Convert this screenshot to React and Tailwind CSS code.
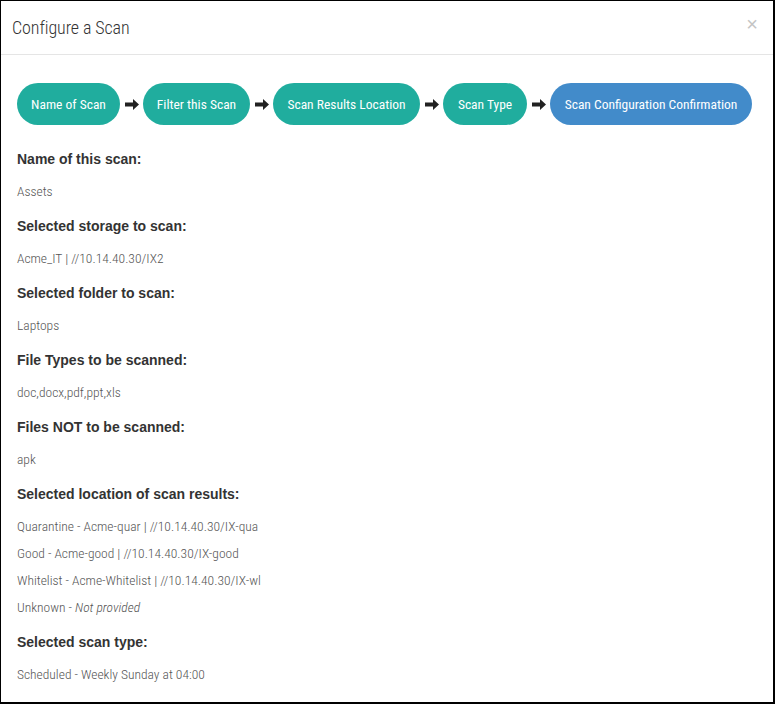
const STEPS = [
  { label: 'Name of Scan', w: 'w-[103px]' },
  { label: 'Filter this Scan', w: 'w-[107px]' },
  { label: 'Scan Results Location', w: 'w-[147px]' },
  { label: 'Scan Type', w: 'w-[84px]' },
  { label: 'Scan Configuration Confirmation', w: 'w-[202px]', active: true },
];

const SECTIONS = [
  { title: 'Name of this scan:', lines: ['Assets'] },
  { title: 'Selected storage to scan:', lines: ['Acme_IT | //10.14.40.30/IX2'] },
  { title: 'Selected folder to scan:', lines: ['Laptops'] },
  { title: 'File Types to be scanned:', lines: ['doc,docx,pdf,ppt,xls'] },
  { title: 'Files NOT to be scanned:', lines: ['apk'] },
  {
    title: 'Selected location of scan results:',
    lines: [
      'Quarantine - Acme-quar | //10.14.40.30/IX-qua',
      'Good - Acme-good | //10.14.40.30/IX-good',
      'Whitelist - Acme-Whitelist | //10.14.40.30/IX-wl',
      <>Unknown - <i>Not provided</i></>,
    ],
  },
  { title: 'Selected scan type:', lines: ['Scheduled - Weekly Sunday at 04:00'] },
];

function Arrow() {
  return (
    <svg width="14" height="11" viewBox="0 0 14 11" className="ml-[5px] mr-[4px] shrink-0">
      <path d="M0 3.5h8V0l6 5.5-6 5.5V7.5H0z" fill="#222" />
    </svg>
  );
}

export default function App() {
  const cond = { fontFamily: '"Roboto Condensed", Roboto, "Noto Sans", sans-serif', fontStretch: '75%' };
  return (
    <div className="w-[775px] h-[704px] bg-white border border-black border-r-2 border-b-2 overflow-hidden">
      <div className="h-[54px] border-b border-[#e5e5e5] pl-[11px] pr-[15px] flex items-center justify-between">
        <h4 className="text-[18px] font-light text-[#333] tracking-[-0.1px]" style={cond}>Configure a Scan</h4>
        <span className="text-[20px] leading-none text-[#c4c4c4] -mt-[8px]" style={{ fontFamily: '"Liberation Sans", sans-serif' }}>×</span>
      </div>

      <div className="px-[16px] pt-[28px]">
        <div className="flex items-center">
          {STEPS.map((s, i) => (
            <div key={s.label} className="flex items-center">
              {i > 0 && <Arrow />}
              <div
                className={`${s.w} h-[42px] rounded-full flex items-center justify-center text-white text-[13.5px] ${s.active ? 'bg-[#428bca]' : 'bg-[#20ad9e]'}`}
                style={cond}
              >
                {s.label}
              </div>
            </div>
          ))}
        </div>

        <div className="mt-[24px] flex flex-col gap-[15px]">
          {SECTIONS.map((sec) => (
            <div key={sec.title}>
              <div className="h-[20px] leading-[20px] text-[14px] font-bold text-[#333]" style={{ fontFamily: '"Liberation Sans", Arial, sans-serif' }}>
                {sec.title}
              </div>
              <div className="mt-[12px] flex flex-col gap-[7px]">
                {sec.lines.map((l, j) => (
                  <div key={j} className="h-[20px] leading-[20px] text-[13.5px] font-light text-[#555]" style={cond}>
                    {l}
                  </div>
                ))}
              </div>
            </div>
          ))}
        </div>
      </div>
    </div>
  );
}
